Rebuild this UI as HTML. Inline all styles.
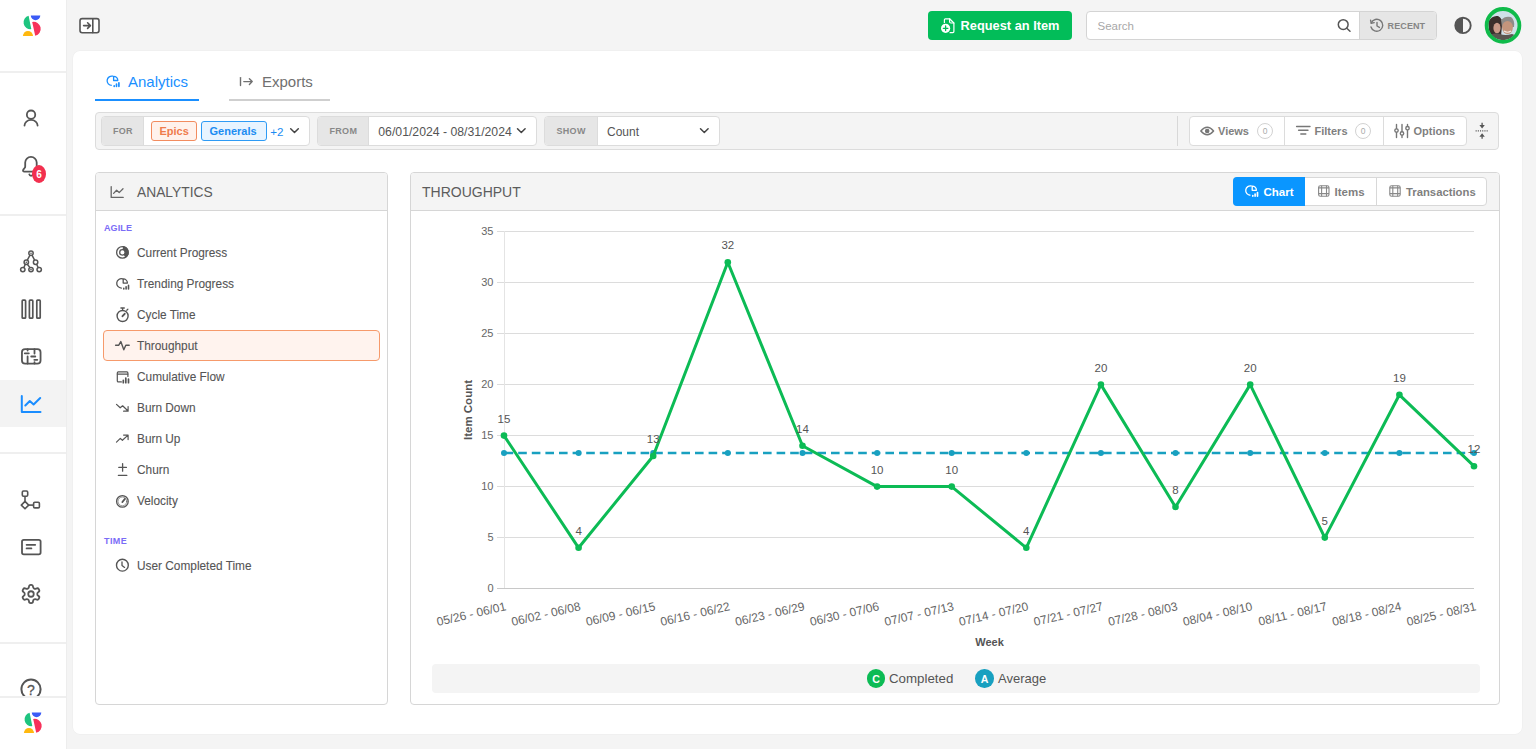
<!DOCTYPE html>
<html><head><meta charset="utf-8">
<style>
*{box-sizing:border-box;margin:0;padding:0}
html,body{width:1536px;height:749px;overflow:hidden;background:#f4f4f4;font-family:"Liberation Sans",sans-serif;color:#555}
.abs{position:absolute}
#side{position:absolute;left:0;top:0;width:66px;height:749px;background:#fff}
.hr{position:absolute;left:0;width:66px;height:2px;background:#efefef}
#panel{position:absolute;left:73px;top:51px;width:1449px;height:683px;background:#fff;border-radius:7px;box-shadow:0 0 0 0.5px #ececec}
.card{position:absolute;border:1px solid #d6d6d6;border-radius:4px;background:#fff;overflow:hidden}
.chead{position:absolute;left:0;top:0;right:0;height:38px;background:#f4f4f4;border-bottom:1px solid #d6d6d6}
svg{position:absolute;overflow:visible}
.t{position:absolute;white-space:nowrap;line-height:1}
</style></head><body>

<!-- SIDEBAR -->
<div class="abs" style="left:66px;top:0;width:1px;height:749px;background:#ededed"></div>
<div id="side">
  <div class="hr" style="top:71px"></div>
  <div class="hr" style="top:214px"></div>
  <div class="hr" style="top:452px"></div>
  <div class="hr" style="top:642px"></div>
  <div class="hr" style="top:695.8px"></div>
  <div class="abs" style="left:0;top:380px;width:66px;height:47px;background:#f3f3f3"></div>
  <!-- logo top -->
  <svg style="left:0;top:0" width="66" height="50" viewBox="0 0 66 50">
    <path d="M28.6 15.7 L31.3 29.1 A6.85 6.85 0 0 1 28.6 15.7 Z" fill="#1ec47f"/>
    <path d="M30.8 15.4 L40.3 15.4 A4.75 4.75 0 0 1 30.8 15.4 Z" fill="#3b5bf6"/>
    <path d="M32.2 22 L35.2 35.7 A7 7 0 0 0 32.2 22 Z" fill="#f7325a"/>
    <path d="M22.9 36 L33 36 A5.05 5.05 0 0 0 22.9 36 Z" fill="#ffb80f"/>
  </svg>
  <!-- person -->
  <svg style="left:0;top:100px" width="66" height="40" viewBox="0 100 66 40" fill="none" stroke="#555" stroke-width="1.8" stroke-linecap="round">
    <circle cx="31.05" cy="114.7" r="4.2"/>
    <path d="M24.5 125.6 A6.55 5.7 0 0 1 37.6 125.6"/>
  </svg>
  <!-- bell -->
  <svg style="left:0;top:150px" width="66" height="40" viewBox="0 150 66 40" fill="none" stroke="#555" stroke-width="1.8" stroke-linecap="round" stroke-linejoin="round">
    <path d="M36.7 168 L36.7 162.6 A5.75 5.75 0 0 0 25.2 162.6 L25.2 166.4 Q25.2 167.3 24.6 168 L23.3 169.6 Q22.3 171.6 24.5 171.6 L37.5 171.6"/>
    <path d="M29.3 174.4 A1.8 1.8 0 0 0 32.8 174.4"/>
  </svg>
  <div class="abs" style="left:32px;top:164.8px;width:14px;height:18.2px;border-radius:50%;background:#f2304f"></div>
  <div class="t" style="left:31.5px;top:169.6px;width:15px;text-align:center;color:#fff;font-size:10px;font-weight:bold">6</div>
  <!-- hierarchy -->
  <svg style="left:0;top:240px" width="66" height="40" viewBox="0 240 66 40" fill="none" stroke="#555" stroke-width="1.5">
    <circle cx="31" cy="253.2" r="2.2"/>
    <circle cx="26.3" cy="262.2" r="2.2"/>
    <circle cx="35.6" cy="262.2" r="2.2"/>
    <circle cx="22.8" cy="269.6" r="2.2"/>
    <circle cx="31" cy="269.6" r="2.2"/>
    <circle cx="39.2" cy="269.6" r="2.2"/>
    <path d="M30 255.2 L27.3 260.2 M32 255.2 L34.6 260.2 M25.3 264.2 L23.8 267.6 M27.3 264.2 L30 267.6 M36.6 264.2 L38.2 267.6"/>
    <circle cx="31" cy="253.2" r="0.8" fill="#555" stroke="none"/>
    <circle cx="26.3" cy="262.2" r="0.8" fill="#555" stroke="none"/>
    <circle cx="31" cy="269.6" r="0.8" fill="#555" stroke="none"/>
  </svg>
  <!-- columns -->
  <svg style="left:0;top:290px" width="66" height="40" viewBox="0 290 66 40" fill="none" stroke="#555" stroke-width="1.7">
    <rect x="22.2" y="300.2" width="3.4" height="18" rx="0.8"/>
    <rect x="29.4" y="300.2" width="3.4" height="18" rx="0.8"/>
    <rect x="36.8" y="300.2" width="3.4" height="18" rx="0.8"/>
  </svg>
  <!-- planner -->
  <svg style="left:0;top:340px" width="66" height="30" viewBox="0 340 66 30" fill="none" stroke="#555" stroke-width="1.8" stroke-linecap="round">
    <rect x="21.95" y="349.1" width="18.6" height="14.5" rx="3.2"/>
    <path d="M27.6 349.1 L27.6 350.6 M27.6 356.4 L27.6 363.6 M34.5 349.1 L34.5 353.6 M34.5 362.2 L34.5 363.6 M24.8 353.3 L28.8 353.3 M31.2 356.5 L35.3 356.5 M34.3 359.8 L37.3 359.8"/>
  </svg>
  <!-- chart active -->
  <svg style="left:0;top:385px" width="66" height="40" viewBox="0 385 66 40" fill="none" stroke="#1a8dff" stroke-width="2" stroke-linecap="round" stroke-linejoin="round">
    <path d="M21.8 396 L21.8 412 L40.5 412"/>
    <path d="M25.3 405.5 L29.8 401 L33.6 404.5 L40.2 398"/>
  </svg>
  <!-- branch -->
  <svg style="left:0;top:480px" width="66" height="40" viewBox="0 480 66 40" fill="none" stroke="#555" stroke-width="1.6" stroke-linejoin="round">
    <rect x="22.3" y="491" width="5.4" height="5.2" rx="1.2"/>
    <path d="M25 496.2 L25 501.4"/>
    <path d="M25 501.4 L28.7 505.1 L25 508.8 L21.3 505.1 Z"/>
    <path d="M28.7 505.1 L33.6 505.1"/>
    <rect x="33.6" y="502.3" width="5.8" height="5.6" rx="1.2"/>
  </svg>
  <!-- message -->
  <svg style="left:0;top:530px" width="66" height="30" viewBox="0 530 66 30" fill="none" stroke="#555" stroke-width="1.8" stroke-linecap="round">
    <rect x="22" y="539.8" width="18.6" height="14.6" rx="1.8"/>
    <path d="M26.6 544.8 L35.2 544.8 M26.6 548.4 L31.4 548.4"/>
  </svg>
  <!-- gear -->
  <svg style="left:20px;top:583px" width="22" height="22" viewBox="0 0 24 24" fill="none" stroke="#555" stroke-width="1.95" stroke-linejoin="round">
    <path d="M12.22 2h-.44a2 2 0 0 0-2 2v.18a2 2 0 0 1-1 1.73l-.43.25a2 2 0 0 1-2 0l-.15-.08a2 2 0 0 0-2.73.73l-.22.38a2 2 0 0 0 .73 2.73l.15.1a2 2 0 0 1 1 1.72v.51a2 2 0 0 1-1 1.74l-.15.09a2 2 0 0 0-.73 2.73l.22.38a2 2 0 0 0 2.73.73l.15-.08a2 2 0 0 1 2 0l.43.25a2 2 0 0 1 1 1.73V20a2 2 0 0 0 2 2h.44a2 2 0 0 0 2-2v-.18a2 2 0 0 1 1-1.73l.43-.25a2 2 0 0 1 2 0l.15.08a2 2 0 0 0 2.730-.73l.22-.39a2 2 0 0 0-.73-2.73l-.15-.08a2 2 0 0 1-1-1.74v-.5a2 2 0 0 1 1-1.74l.15-.09a2 2 0 0 0 .73-2.730l-.22-.38a2 2 0 0 0-2.73-.73l-.15.08a2 2 0 0 1-2 0l-.43-.25a2 2 0 0 1-1-1.73V4a2 2 0 0 0-2-2z"/>
    <circle cx="12" cy="12" r="3"/>
  </svg>
  <!-- help -->
  <svg style="left:0;top:670px;overflow:hidden" width="66" height="25.6" viewBox="0 670 66 25.6" fill="none" stroke="#555" stroke-width="2">
    <circle cx="31" cy="689.2" r="9.6"/>
  </svg>
  <div class="abs" style="left:24px;top:680px;width:14px;height:15.6px;overflow:hidden"><div class="t" style="left:0;top:3.2px;width:14px;text-align:center;font-size:14px;color:#555;-webkit-text-stroke:0.3px #555">?</div></div>
  <div class="abs" style="left:0;top:697.8px;width:66px;height:52px;background:#fff"></div>
  <!-- logo bottom -->
  <svg style="left:1px;top:697px" width="66" height="50" viewBox="0 0 66 50">
    <path d="M28.6 15.7 L31.3 29.1 A6.85 6.85 0 0 1 28.6 15.7 Z" fill="#1ec47f"/>
    <path d="M30.8 15.4 L40.3 15.4 A4.75 4.75 0 0 1 30.8 15.4 Z" fill="#3b5bf6"/>
    <path d="M32.2 22 L35.2 35.7 A7 7 0 0 0 32.2 22 Z" fill="#f7325a"/>
    <path d="M22.9 36 L33 36 A5.05 5.05 0 0 0 22.9 36 Z" fill="#ffb80f"/>
  </svg>
</div>

<!-- MAIN PANEL -->
<div id="panel"></div>

<!-- TOP BAR -->
<svg style="left:76px;top:14px" width="28" height="24" viewBox="76 14 28 24" fill="none" stroke="#555" stroke-width="1.6" stroke-linecap="round" stroke-linejoin="round">
  <rect x="80" y="18.6" width="19" height="14.2" rx="2.2" fill="#fff"/>
  <path d="M92.8 18.8 L92.8 32.6"/>
  <path d="M83.6 25.6 L90.4 25.6 M87.6 22.8 L90.4 25.6 L87.6 28.4"/>
</svg>
<div class="abs" style="left:928px;top:11px;width:144px;height:29px;background:#02bd59;border-radius:4px"></div>
<svg style="left:938px;top:16px" width="20" height="20" viewBox="938 16 20 20" fill="none" stroke="#fff" stroke-width="1.2" stroke-linejoin="round" stroke-linecap="round">
  <path d="M944.4 23.4 L944.4 19.8 Q944.4 18.8 945.4 18.8 L949.6 18.8 L953.9 23 L953.9 31.6 Q953.9 32.6 952.9 32.6 L949.8 32.6"/>
  <path d="M949.6 18.8 L949.6 21.8 Q949.6 23 950.8 23 L953.9 23"/>
  <circle cx="945.6" cy="28.3" r="5.6" fill="#02bd59" stroke="none"/>
  <circle cx="945.6" cy="28.3" r="4.6" fill="#fff" stroke="none"/>
  <path d="M945.6 26 L945.6 30.6 M943.3 28.3 L947.9 28.3" stroke="#02bd59" stroke-width="1.3"/>
</svg>
<div class="t" style="left:960.6px;top:20.2px;font-size:12.8px;font-weight:bold;color:#fff">Request an Item</div>

<div class="abs" style="left:1086px;top:11px;width:351px;height:29px;background:#fff;border:1px solid #d4d4d4;border-radius:4px;overflow:hidden">
  <div class="abs" style="left:272px;top:0;width:78px;height:27px;background:#e6e6e6;border-left:1px solid #d4d4d4"></div>
</div>
<div class="t" style="left:1097.5px;top:20.8px;font-size:11.5px;color:#a8a8a8">Search</div>
<svg style="left:1335px;top:17px" width="18" height="18" viewBox="1335 17 18 18" fill="none" stroke="#555" stroke-width="1.5" stroke-linecap="round">
  <circle cx="1343.2" cy="24.6" r="4.9"/>
  <path d="M1346.8 28.2 L1350 31.2"/>
</svg>
<svg style="left:1368px;top:17px" width="18" height="18" viewBox="1368 17 18 18" fill="none" stroke="#777" stroke-width="1.4" stroke-linecap="round" stroke-linejoin="round">
  <path d="M1371.2 23 A6 6 0 1 1 1371 27"/>
  <path d="M1370.6 20.2 L1371.2 23.2 L1374.2 22.6"/>
  <path d="M1377 22.4 L1377 26 L1379.4 27.4"/>
</svg>
<div class="t" style="left:1387.6px;top:21.6px;font-size:9px;font-weight:bold;color:#858585;letter-spacing:0.1px">RECENT</div>

<svg style="left:1450px;top:13px" width="26" height="26" viewBox="1450 13 26 26">
  <circle cx="1463" cy="25.4" r="7.7" fill="none" stroke="#555" stroke-width="1.9"/>
  <path d="M1463 17.7 A7.7 7.7 0 0 0 1463 33.1 Z" fill="#555"/>
</svg>
<svg style="left:1482px;top:5px" width="42" height="42" viewBox="1482 5 42 42">
  <defs><clipPath id="av"><circle cx="1503" cy="25.4" r="14.8"/></clipPath></defs>
  <g clip-path="url(#av)">
    <rect x="1486" y="8" width="34" height="36" fill="#cfe0e8"/>
    <path d="M1488 22 Q1492 15 1498 16 Q1503 18 1502 26 L1501 36 L1490 40 Z" fill="#3b2f2c"/>
    <ellipse cx="1497" cy="28" rx="3.6" ry="5.2" fill="#c99a88"/>
    <path d="M1501 20 Q1505 15.5 1511 17 Q1515 20 1514 27 L1502 27 Z" fill="#8e8b88"/>
    <ellipse cx="1507.5" cy="27.5" rx="5.4" ry="6.6" fill="#c4957c"/>
    <path d="M1504 31 Q1507.5 33.5 1511 31" stroke="#f2ebe6" stroke-width="1.2" fill="none"/>
    <path d="M1486 44 L1489 36 Q1494 32 1500 34 Q1505 36 1512 34 Q1517 35 1520 40 L1520 44 Z" fill="#5a5650"/>
  </g>
  <circle cx="1503" cy="25.4" r="16.4" fill="none" stroke="#0fbb4a" stroke-width="3.8"/>
</svg>


<!-- TABS -->
<svg style="left:104px;top:72px" width="20" height="20" viewBox="104 72 20 20" fill="none" stroke="#1a8fff" stroke-width="1.3" stroke-linejoin="round">
  <path d="M113 76.2 A4.7 4.7 0 1 0 111.8 85.45"/>
  <path d="M113.6 76.3 L113.6 80.5 L117.8 80.5 A4.2 4.2 0 0 0 113.6 76.3 Z"/>
  <path d="M114.2 85.8 L114.2 86.3 M116.5 84.2 L116.5 86.3 M118.9 82.8 L118.9 86.3" stroke-width="1.7" stroke-linecap="round"/>
</svg>
<div class="t" style="left:128px;top:73.6px;font-size:15px;color:#1a8fff">Analytics</div>
<div class="abs" style="left:95px;top:98.7px;width:104px;height:2px;background:#1a8fff"></div>
<svg style="left:236px;top:72px" width="20" height="20" viewBox="236 72 20 20" fill="none" stroke="#707070" stroke-width="1.4" stroke-linecap="round" stroke-linejoin="round">
  <path d="M240.5 77.6 L240.5 85.6"/>
  <path d="M243.8 81.6 L252.2 81.6 M249.4 78.8 L252.2 81.6 L249.4 84.4"/>
</svg>
<div class="t" style="left:262px;top:73.6px;font-size:15px;color:#707070">Exports</div>
<div class="abs" style="left:228.7px;top:98.7px;width:101.3px;height:2px;background:#cfcfcf"></div>

<!-- FILTER BAR -->
<div class="abs" style="left:95px;top:112px;width:1404px;height:38px;background:#f4f4f4;border:1px solid #dcdcdc;border-radius:4px"></div>
<div class="abs" style="left:101px;top:116px;width:209px;height:30px;background:#fff;border:1px solid #dcdcdc;border-radius:4px;overflow:hidden">
  <div class="abs" style="left:0;top:0;width:42px;height:28px;background:#e6e6e6;border-right:1px solid #dcdcdc"></div>
</div>
<div class="t" style="left:113px;top:127px;font-size:9px;font-weight:bold;color:#888;letter-spacing:0.3px">FOR</div>
<div class="abs" style="left:151px;top:121px;width:46px;height:20px;background:#fff2ec;border:1px solid #f28c5f;border-radius:3px"></div>
<div class="t" style="left:159.5px;top:126px;font-size:11px;font-weight:bold;color:#ef7c4c">Epics</div>
<div class="abs" style="left:201px;top:121px;width:66px;height:20px;background:#e8f4ff;border:1px solid #2e9bf5;border-radius:3px"></div>
<div class="t" style="left:209.5px;top:126px;font-size:11px;font-weight:bold;color:#1b8cf2">Generals</div>
<div class="t" style="left:270.3px;top:125.8px;font-size:11.6px;color:#1b8cf2">+2</div>
<svg style="left:287px;top:124px" width="14" height="14" viewBox="287 124 14 14" fill="none" stroke="#444" stroke-width="1.5" stroke-linecap="round" stroke-linejoin="round"><path d="M290.7 128.7 L294.5 132.5 L298.3 128.7"/></svg>

<div class="abs" style="left:317px;top:116px;width:220px;height:30px;background:#fff;border:1px solid #dcdcdc;border-radius:4px;overflow:hidden">
  <div class="abs" style="left:0;top:0;width:51px;height:28px;background:#e6e6e6;border-right:1px solid #dcdcdc"></div>
</div>
<div class="t" style="left:329.5px;top:127px;font-size:9px;font-weight:bold;color:#888;letter-spacing:0.3px">FROM</div>
<div class="t" style="left:378.3px;top:125.7px;font-size:12.25px;color:#555">06/01/2024 - 08/31/2024</div>
<svg style="left:514px;top:124px" width="14" height="14" viewBox="514 124 14 14" fill="none" stroke="#444" stroke-width="1.5" stroke-linecap="round" stroke-linejoin="round"><path d="M517.5 128.7 L521.3 132.5 L525.1 128.7"/></svg>

<div class="abs" style="left:544px;top:116px;width:176px;height:30px;background:#fff;border:1px solid #dcdcdc;border-radius:4px;overflow:hidden">
  <div class="abs" style="left:0;top:0;width:53px;height:28px;background:#e6e6e6;border-right:1px solid #dcdcdc"></div>
</div>
<div class="t" style="left:556.5px;top:127px;font-size:9px;font-weight:bold;color:#888;letter-spacing:0.3px">SHOW</div>
<div class="t" style="left:607px;top:125.7px;font-size:12px;color:#555">Count</div>
<svg style="left:697px;top:124px" width="14" height="14" viewBox="697 124 14 14" fill="none" stroke="#444" stroke-width="1.5" stroke-linecap="round" stroke-linejoin="round"><path d="M700.5 128.7 L704.3 132.5 L708.1 128.7"/></svg>

<div class="abs" style="left:1177px;top:116px;width:1px;height:30px;background:#d8d8d8"></div>
<div class="abs" style="left:1189px;top:116px;width:278px;height:30px;background:#fff;border:1px solid #dcdcdc;border-radius:4px">
  <div class="abs" style="left:94px;top:0;width:1px;height:28px;background:#dcdcdc"></div>
  <div class="abs" style="left:193px;top:0;width:1px;height:28px;background:#dcdcdc"></div>
</div>
<svg style="left:1199px;top:123px" width="16" height="16" viewBox="1199 123 16 16" fill="none" stroke="#777" stroke-width="1.4" stroke-linejoin="round">
  <path d="M1200.8 131 Q1207.2 123.6 1213.6 131 Q1207.2 138.4 1200.8 131 Z"/>
  <circle cx="1207.2" cy="131" r="1.6" fill="#777"/>
</svg>
<div class="t" style="left:1218px;top:125.8px;font-size:11px;font-weight:bold;color:#7f7f7f">Views</div>
<div class="abs" style="left:1257px;top:123px;width:16px;height:16px;border:1px solid #d2d2d2;border-radius:50%"></div>
<div class="t" style="left:1257px;top:127px;width:16px;text-align:center;font-size:8.5px;color:#aaa">0</div>
<svg style="left:1294px;top:123px" width="18" height="16" viewBox="1294 123 18 16" fill="none" stroke="#777" stroke-width="1.4" stroke-linecap="round">
  <path d="M1296.6 126.5 L1310 126.5 M1298.6 130.2 L1308 130.2 M1300.8 134 L1305.8 134"/>
</svg>
<div class="t" style="left:1314.5px;top:125.8px;font-size:11px;font-weight:bold;color:#7f7f7f">Filters</div>
<div class="abs" style="left:1355px;top:123px;width:16px;height:16px;border:1px solid #d2d2d2;border-radius:50%"></div>
<div class="t" style="left:1355px;top:127px;width:16px;text-align:center;font-size:8.5px;color:#aaa">0</div>
<svg style="left:1393px;top:122px" width="18" height="18" viewBox="1393 122 18 18" fill="none" stroke="#777" stroke-width="1.4" stroke-linecap="round">
  <path d="M1396.5 124.4 L1396.5 137.6 M1402 124.4 L1402 137.6 M1407.5 124.4 L1407.5 137.6"/>
  <circle cx="1396.5" cy="130.6" r="1.7" fill="#fff"/>
  <circle cx="1402" cy="133.4" r="1.7" fill="#fff"/>
  <circle cx="1407.5" cy="128.2" r="1.7" fill="#fff"/>
</svg>
<div class="t" style="left:1413.5px;top:125.8px;font-size:11px;font-weight:bold;color:#7f7f7f">Options</div>
<svg style="left:1474px;top:121px" width="16" height="20" viewBox="1474 121 16 20">
  <path d="M1475.6 130.9 L1488.6 130.9" stroke="#555" stroke-width="1.1" stroke-dasharray="1.1 1.1"/>
  <path d="M1482.1 122.8 L1482.1 125.8 M1482.1 136.2 L1482.1 138.8" stroke="#555" stroke-width="1.3"/>
  <path d="M1479.4 125.1 L1484.8 125.1 L1482.1 128.6 Z M1479.4 136.8 L1484.8 136.8 L1482.1 133.3 Z" fill="#555"/>
</svg>

<!-- LEFT CARD -->
<div class="card" style="left:95px;top:172px;width:293px;height:533px">
  <div class="chead"></div>
</div>
<svg style="left:106px;top:182px" width="22" height="20" viewBox="106 182 22 20" fill="none" stroke="#666" stroke-width="1.3" stroke-linecap="round" stroke-linejoin="round">
  <path d="M111.2 186.6 L111.2 197.4 L123.2 197.4"/>
  <path d="M113.6 193.4 L116.6 190.2 L119.2 192.6 L123 188.8"/>
</svg>
<div class="t" style="left:137px;top:185.6px;font-size:13.8px;color:#5c5c5c">ANALYTICS</div>
<div class="t" style="left:104px;top:224px;font-size:9px;font-weight:bold;color:#7a6cf7;letter-spacing:0.1px">AGILE</div>
<div class="t" style="left:104px;top:536.5px;font-size:9px;font-weight:bold;color:#7a6cf7;letter-spacing:0.4px">TIME</div>
<div class="abs" style="left:103px;top:330px;width:277px;height:31px;background:#fff3ee;border:1px solid #f69a6b;border-radius:4px"></div>
<div class="t" style="left:137px;top:248.1px;font-size:11.85px;color:#555;-webkit-text-stroke:0.1px #555">Current Progress</div>
<div class="t" style="left:137px;top:279.1px;font-size:11.85px;color:#555;-webkit-text-stroke:0.1px #555">Trending Progress</div>
<div class="t" style="left:137px;top:310.1px;font-size:11.85px;color:#555;-webkit-text-stroke:0.1px #555">Cycle Time</div>
<div class="t" style="left:137px;top:341.1px;font-size:11.85px;color:#555;-webkit-text-stroke:0.1px #555">Throughput</div>
<div class="t" style="left:137px;top:372.1px;font-size:11.85px;color:#555;-webkit-text-stroke:0.1px #555">Cumulative Flow</div>
<div class="t" style="left:137px;top:403.1px;font-size:11.85px;color:#555;-webkit-text-stroke:0.1px #555">Burn Down</div>
<div class="t" style="left:137px;top:434.1px;font-size:11.85px;color:#555;-webkit-text-stroke:0.1px #555">Burn Up</div>
<div class="t" style="left:137px;top:465.1px;font-size:11.85px;color:#555;-webkit-text-stroke:0.1px #555">Churn</div>
<div class="t" style="left:137px;top:496.1px;font-size:11.85px;color:#555;-webkit-text-stroke:0.1px #555">Velocity</div>
<div class="t" style="left:137px;top:560.6px;font-size:11.85px;color:#555;-webkit-text-stroke:0.1px #555">User Completed Time</div>
<svg style="left:110px;top:240px" width="26" height="340" viewBox="110 240 26 340" fill="none" stroke="#555" stroke-width="1.3" stroke-linecap="round" stroke-linejoin="round">
  <!-- current progress -->
  <circle cx="122.4" cy="252.4" r="5.75" stroke-width="1.3"/>
  <path d="M122.95 246.07 A6.35 6.35 0 0 1 125.58 257.9 L123.75 254.74 A2.7 2.7 0 0 0 122.64 249.71 Z" fill="#555" stroke="none"/>
  <circle cx="122.4" cy="252.4" r="2.7" stroke-width="1.3"/>
  <!-- trending -->
<g transform="translate(9.6 202.6)"><path d="M113 76.2 A4.7 4.7 0 1 0 111.8 85.45"/>
  <path d="M113.6 76.3 L113.6 80.5 L117.8 80.5 A4.2 4.2 0 0 0 113.6 76.3 Z"/>
  <path d="M114.2 85.8 L114.2 86.3 M116.5 84.2 L116.5 86.3 M118.9 82.8 L118.9 86.3" stroke-width="1.6" stroke-linecap="round"/></g>
  <!-- cycle time -->
  <circle cx="122.6" cy="316" r="5.5" stroke-width="1.4"/>
  <path d="M120.9 308 L124.3 308 M122.6 308 L122.6 310.4" stroke-width="1.3"/>
  <path d="M126.8 310.2 L127.9 309.1" stroke-width="1.3"/>
  <path d="M122.5 316.2 L124.7 313.8" stroke-width="1.9"/>
  <!-- throughput -->
  <path d="M115.6 345.2 L118.8 345.2 L120.8 341.6 L123.8 349.8 L125.8 345.2 L129.2 345.2" stroke-width="1.4"/>
  <!-- cumulative flow -->
  <path d="M127.9 376.4 L127.9 372.9 Q127.9 371.9 126.9 371.9 L118.3 371.9 Q117.3 371.9 117.3 372.9 L117.3 380.9 Q117.3 381.9 118.3 381.9 L121.4 381.9" stroke-width="1.2"/>
  <path d="M117.5 374.2 L127.7 374.2" stroke-width="1.3"/>
  <path d="M123.3 380.4 L123.3 382.7 M125.8 378.2 L125.8 382.7 M128.5 379.2 L128.5 382.7" stroke-width="1.7" stroke-linecap="round"/>
  <!-- burn down -->
  <path d="M116.5 404.4 L120.2 407.8 L122.6 405.8 L127.8 410.8 M123.6 411.2 L128.1 411.2 L128.1 406.6" stroke-width="1.2"/>
  <!-- burn up -->
  <path d="M116.5 442.2 L120.3 438.4 L122.4 440.3 L127.8 435.4 M123.6 435.1 L128.1 435.1 L128.1 439.6" stroke-width="1.2"/>
  <!-- churn -->
  <path d="M122.6 463.6 L122.6 471.2 M118.8 467.4 L126.4 467.4 M118.4 475.4 L126.8 475.4" stroke-width="1.3"/>
  <!-- velocity -->
  <circle cx="122.4" cy="501.4" r="5.8" stroke-width="1.3"/>
  <circle cx="122.4" cy="501.4" r="4.4" stroke-width="0.6"/>
  <path d="M122.3 502.1 L124.9 498.9" stroke-width="1.7" stroke-linecap="round"/>
  <!-- clock -->
  <circle cx="122.4" cy="565.2" r="5.9" stroke-width="1.4"/>
  <path d="M122 561.8 L122 565.4 L124.6 567.4" stroke-width="1.3"/>
</svg>

<!-- CHART CARD -->
<div class="card" style="left:410px;top:172px;width:1090px;height:533px">
  <div class="chead"></div>
</div>
<div class="t" style="left:422px;top:184.6px;font-size:14px;color:#5c5c5c">THROUGHPUT</div>
<div class="abs" style="left:1233px;top:177px;width:254px;height:29px;background:#fff;border:1px solid #d8d8d8;border-radius:4px">
  <div class="abs" style="left:142px;top:0;width:1px;height:27px;background:#d8d8d8"></div>
</div>
<div class="abs" style="left:1233px;top:177px;width:72px;height:29px;background:#0a96ff;border-radius:4px 0 0 4px"></div>
<svg style="left:1244px;top:183px" width="18" height="18" viewBox="1244 183 18 18" fill="none" stroke="#fff" stroke-width="1.3" stroke-linejoin="round">
  <g transform="translate(1138.6 109.8)"><path d="M113 76.2 A4.7 4.7 0 1 0 111.8 85.45"/>
  <path d="M113.6 76.3 L113.6 80.5 L117.8 80.5 A4.2 4.2 0 0 0 113.6 76.3 Z"/>
  <path d="M114.2 85.8 L114.2 86.3 M116.5 84.2 L116.5 86.3 M118.9 82.8 L118.9 86.3" stroke-width="1.7" stroke-linecap="round"/></g>
</svg>
<div class="t" style="left:1263.5px;top:187px;font-size:11.5px;font-weight:bold;color:#fff">Chart</div>
<svg style="left:1316px;top:184px" width="16" height="16" viewBox="1316 184 16 16" fill="none" stroke="#888" stroke-width="1.1">
  <rect x="1318.6" y="185.7" width="10.4" height="10.6" rx="1.8"/>
  <path d="M1318.6 187.9 L1329 187.9 M1318.6 193.6 L1329 193.6 M1321.6 185.7 L1321.6 196.3 M1326.5 185.7 L1326.5 196.3"/>
</svg>
<div class="t" style="left:1334.5px;top:187px;font-size:11.5px;font-weight:bold;color:#7f7f7f">Items</div>
<svg style="left:1387px;top:184px" width="16" height="16" viewBox="1387 184 16 16" fill="none" stroke="#888" stroke-width="1.1">
  <rect x="1389.8" y="185.7" width="10.4" height="10.6" rx="1.8"/>
  <path d="M1389.8 187.9 L1400.2 187.9 M1389.8 193.6 L1400.2 193.6 M1392.8 185.7 L1392.8 196.3 M1397.7 185.7 L1397.7 196.3"/>
</svg>
<div class="t" style="left:1406px;top:187px;font-size:11.3px;font-weight:bold;color:#7f7f7f">Transactions</div>
<svg id="chart" style="left:410px;top:212px" width="1090" height="492" viewBox="410 212 1090 492">
<line x1="497" y1="588.5" x2="1474" y2="588.5" stroke="#dcdcdc" stroke-width="1"/>
<text x="493.5" y="591.7" text-anchor="end" font-family="Liberation Sans" font-size="11px" fill="#666">0</text>
<line x1="497" y1="537.5" x2="1474" y2="537.5" stroke="#dcdcdc" stroke-width="1"/>
<text x="493.5" y="540.7" text-anchor="end" font-family="Liberation Sans" font-size="11px" fill="#666">5</text>
<line x1="497" y1="486.5" x2="1474" y2="486.5" stroke="#dcdcdc" stroke-width="1"/>
<text x="493.5" y="489.7" text-anchor="end" font-family="Liberation Sans" font-size="11px" fill="#666">10</text>
<line x1="497" y1="435.5" x2="1474" y2="435.5" stroke="#dcdcdc" stroke-width="1"/>
<text x="493.5" y="438.7" text-anchor="end" font-family="Liberation Sans" font-size="11px" fill="#666">15</text>
<line x1="497" y1="384.5" x2="1474" y2="384.5" stroke="#dcdcdc" stroke-width="1"/>
<text x="493.5" y="387.7" text-anchor="end" font-family="Liberation Sans" font-size="11px" fill="#666">20</text>
<line x1="497" y1="333.5" x2="1474" y2="333.5" stroke="#dcdcdc" stroke-width="1"/>
<text x="493.5" y="336.7" text-anchor="end" font-family="Liberation Sans" font-size="11px" fill="#666">25</text>
<line x1="497" y1="282.5" x2="1474" y2="282.5" stroke="#dcdcdc" stroke-width="1"/>
<text x="493.5" y="285.7" text-anchor="end" font-family="Liberation Sans" font-size="11px" fill="#666">30</text>
<line x1="497" y1="231.5" x2="1474" y2="231.5" stroke="#dcdcdc" stroke-width="1"/>
<text x="493.5" y="234.7" text-anchor="end" font-family="Liberation Sans" font-size="11px" fill="#666">35</text>
<line x1="504.5" y1="231" x2="504.5" y2="588" stroke="#e4e4e4" stroke-width="1"/>
<line x1="497" y1="588.5" x2="1474" y2="588.5" stroke="#c8c8c8" stroke-width="1"/>
<text x="0" y="0" transform="translate(471.5 410) rotate(-90)" text-anchor="middle" font-family="Liberation Sans" font-size="11.5px" font-weight="bold" fill="#555">Item Count</text>
<line x1="504" y1="452.99" x2="1474" y2="452.99" stroke="#18a0c0" stroke-width="2.5" stroke-dasharray="8.6 5" stroke-dashoffset="-0.6"/>
<circle cx="504.0" cy="452.99" r="3" fill="#18a0c0"/>
<circle cx="578.6" cy="452.99" r="3" fill="#18a0c0"/>
<circle cx="653.2" cy="452.99" r="3" fill="#18a0c0"/>
<circle cx="727.8" cy="452.99" r="3" fill="#18a0c0"/>
<circle cx="802.5" cy="452.99" r="3" fill="#18a0c0"/>
<circle cx="877.1" cy="452.99" r="3" fill="#18a0c0"/>
<circle cx="951.7" cy="452.99" r="3" fill="#18a0c0"/>
<circle cx="1026.3" cy="452.99" r="3" fill="#18a0c0"/>
<circle cx="1100.9" cy="452.99" r="3" fill="#18a0c0"/>
<circle cx="1175.5" cy="452.99" r="3" fill="#18a0c0"/>
<circle cx="1250.2" cy="452.99" r="3" fill="#18a0c0"/>
<circle cx="1324.8" cy="452.99" r="3" fill="#18a0c0"/>
<circle cx="1399.4" cy="452.99" r="3" fill="#18a0c0"/>
<circle cx="1474.0" cy="452.99" r="3" fill="#18a0c0"/>
<polyline points="504.0,435.60 578.6,547.80 653.2,456.00 727.8,262.20 802.5,445.80 877.1,486.60 951.7,486.60 1026.3,547.80 1100.9,384.60 1175.5,507.00 1250.2,384.60 1324.8,537.60 1399.4,394.80 1474.0,466.20" fill="none" stroke="#0cbb55" stroke-width="3" stroke-linejoin="round"/>
<circle cx="504.0" cy="435.60" r="3.3" fill="#0cbb55"/>
<circle cx="578.6" cy="547.80" r="3.3" fill="#0cbb55"/>
<circle cx="653.2" cy="456.00" r="3.3" fill="#0cbb55"/>
<circle cx="727.8" cy="262.20" r="3.3" fill="#0cbb55"/>
<circle cx="802.5" cy="445.80" r="3.3" fill="#0cbb55"/>
<circle cx="877.1" cy="486.60" r="3.3" fill="#0cbb55"/>
<circle cx="951.7" cy="486.60" r="3.3" fill="#0cbb55"/>
<circle cx="1026.3" cy="547.80" r="3.3" fill="#0cbb55"/>
<circle cx="1100.9" cy="384.60" r="3.3" fill="#0cbb55"/>
<circle cx="1175.5" cy="507.00" r="3.3" fill="#0cbb55"/>
<circle cx="1250.2" cy="384.60" r="3.3" fill="#0cbb55"/>
<circle cx="1324.8" cy="537.60" r="3.3" fill="#0cbb55"/>
<circle cx="1399.4" cy="394.80" r="3.3" fill="#0cbb55"/>
<circle cx="1474.0" cy="466.20" r="3.3" fill="#0cbb55"/>
<text x="504.0" y="422.7" text-anchor="middle" font-family="Liberation Sans" font-size="11.5px" fill="#555">15</text>
<text x="578.6" y="534.9" text-anchor="middle" font-family="Liberation Sans" font-size="11.5px" fill="#555">4</text>
<text x="653.2" y="443.1" text-anchor="middle" font-family="Liberation Sans" font-size="11.5px" fill="#555">13</text>
<text x="727.8" y="249.3" text-anchor="middle" font-family="Liberation Sans" font-size="11.5px" fill="#555">32</text>
<text x="802.5" y="432.9" text-anchor="middle" font-family="Liberation Sans" font-size="11.5px" fill="#555">14</text>
<text x="877.1" y="473.7" text-anchor="middle" font-family="Liberation Sans" font-size="11.5px" fill="#555">10</text>
<text x="951.7" y="473.7" text-anchor="middle" font-family="Liberation Sans" font-size="11.5px" fill="#555">10</text>
<text x="1026.3" y="534.9" text-anchor="middle" font-family="Liberation Sans" font-size="11.5px" fill="#555">4</text>
<text x="1100.9" y="371.7" text-anchor="middle" font-family="Liberation Sans" font-size="11.5px" fill="#555">20</text>
<text x="1175.5" y="494.1" text-anchor="middle" font-family="Liberation Sans" font-size="11.5px" fill="#555">8</text>
<text x="1250.2" y="371.7" text-anchor="middle" font-family="Liberation Sans" font-size="11.5px" fill="#555">20</text>
<text x="1324.8" y="524.7" text-anchor="middle" font-family="Liberation Sans" font-size="11.5px" fill="#555">5</text>
<text x="1399.4" y="381.9" text-anchor="middle" font-family="Liberation Sans" font-size="11.5px" fill="#555">19</text>
<text x="1474.0" y="453.3" text-anchor="middle" font-family="Liberation Sans" font-size="11.5px" fill="#555">12</text>
<text x="0" y="0" transform="translate(506.0 607) rotate(-13)" text-anchor="end" dominant-baseline="middle" font-family="Liberation Sans" font-size="12px" fill="#666">05/26 - 06/01</text>
<text x="0" y="0" transform="translate(580.6 607) rotate(-13)" text-anchor="end" dominant-baseline="middle" font-family="Liberation Sans" font-size="12px" fill="#666">06/02 - 06/08</text>
<text x="0" y="0" transform="translate(655.2 607) rotate(-13)" text-anchor="end" dominant-baseline="middle" font-family="Liberation Sans" font-size="12px" fill="#666">06/09 - 06/15</text>
<text x="0" y="0" transform="translate(729.8 607) rotate(-13)" text-anchor="end" dominant-baseline="middle" font-family="Liberation Sans" font-size="12px" fill="#666">06/16 - 06/22</text>
<text x="0" y="0" transform="translate(804.5 607) rotate(-13)" text-anchor="end" dominant-baseline="middle" font-family="Liberation Sans" font-size="12px" fill="#666">06/23 - 06/29</text>
<text x="0" y="0" transform="translate(879.1 607) rotate(-13)" text-anchor="end" dominant-baseline="middle" font-family="Liberation Sans" font-size="12px" fill="#666">06/30 - 07/06</text>
<text x="0" y="0" transform="translate(953.7 607) rotate(-13)" text-anchor="end" dominant-baseline="middle" font-family="Liberation Sans" font-size="12px" fill="#666">07/07 - 07/13</text>
<text x="0" y="0" transform="translate(1028.3 607) rotate(-13)" text-anchor="end" dominant-baseline="middle" font-family="Liberation Sans" font-size="12px" fill="#666">07/14 - 07/20</text>
<text x="0" y="0" transform="translate(1102.9 607) rotate(-13)" text-anchor="end" dominant-baseline="middle" font-family="Liberation Sans" font-size="12px" fill="#666">07/21 - 07/27</text>
<text x="0" y="0" transform="translate(1177.5 607) rotate(-13)" text-anchor="end" dominant-baseline="middle" font-family="Liberation Sans" font-size="12px" fill="#666">07/28 - 08/03</text>
<text x="0" y="0" transform="translate(1252.2 607) rotate(-13)" text-anchor="end" dominant-baseline="middle" font-family="Liberation Sans" font-size="12px" fill="#666">08/04 - 08/10</text>
<text x="0" y="0" transform="translate(1326.8 607) rotate(-13)" text-anchor="end" dominant-baseline="middle" font-family="Liberation Sans" font-size="12px" fill="#666">08/11 - 08/17</text>
<text x="0" y="0" transform="translate(1401.4 607) rotate(-13)" text-anchor="end" dominant-baseline="middle" font-family="Liberation Sans" font-size="12px" fill="#666">08/18 - 08/24</text>
<text x="0" y="0" transform="translate(1476.0 607) rotate(-13)" text-anchor="end" dominant-baseline="middle" font-family="Liberation Sans" font-size="12px" fill="#666">08/25 - 08/31</text>
<text x="989.5" y="646" text-anchor="middle" font-family="Liberation Sans" font-size="11px" font-weight="bold" fill="#555">Week</text>
</svg>
<div class="abs" style="left:432px;top:664px;width:1048px;height:28.6px;background:#f4f4f4;border-radius:4px"></div>
<div class="abs" style="left:866.8px;top:669.3px;width:18.6px;height:18.6px;border-radius:50%;background:#0cbb55"></div>
<div class="t" style="left:866.8px;top:674.2px;width:18.6px;text-align:center;font-size:10.6px;font-weight:bold;color:#fff">C</div>
<div class="t" style="left:889px;top:672px;font-size:13.3px;color:#555">Completed</div>
<div class="abs" style="left:975.3px;top:669.3px;width:18.6px;height:18.6px;border-radius:50%;background:#18a0c0"></div>
<div class="t" style="left:975.3px;top:674.2px;width:18.6px;text-align:center;font-size:10.6px;font-weight:bold;color:#fff">A</div>
<div class="t" style="left:998px;top:672px;font-size:13px;color:#555">Average</div>

</body></html>
